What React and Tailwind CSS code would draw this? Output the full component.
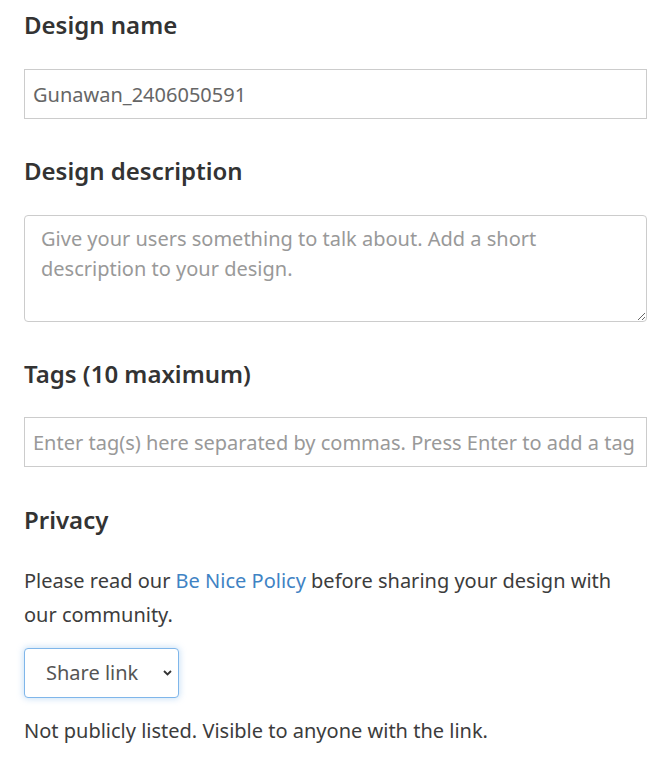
import React from "react";

const font = { fontFamily: "'Noto Sans', Roboto, sans-serif" };

function Heading({ children }) {
  return (
    <h2 className="text-[24px] leading-[30px] font-semibold text-[#333333]">
      {children}
    </h2>
  );
}

export default function App() {
  return (
    <div className="bg-white w-[669px] h-[757px] overflow-hidden" style={font}>
      <div className="pl-[24px] pr-[22px] pt-[10px] flex flex-col">
        <Heading>Design name</Heading>
        <input
          className="mt-[29px] h-[50px] w-full border border-[#cccccc] px-[8px] text-[20px] text-[#666666] outline-none"
          defaultValue="Gunawan_2406050591"
        />

        <div className="mt-[37px]">
          <Heading>Design description</Heading>
        </div>
        <textarea
          className="mt-[29px] h-[107px] w-full border border-[#cccccc] rounded-[4px] px-[16px] py-[8px] text-[20px] leading-[30px] text-[#666666] placeholder:text-[#999999] outline-none"
          placeholder="Give your users something to talk about. Add a short description to your design."
        />

        <div className="mt-[37px]">
          <Heading>Tags (10 maximum)</Heading>
        </div>
        <input
          className="mt-[28px] h-[50px] w-full border border-[#cccccc] px-[8px] text-[20px] text-[#666666] placeholder:text-[#999999] outline-none"
          placeholder="Enter tag(s) here separated by commas. Press Enter to add a tag"
        />

        <div className="mt-[38px]">
          <Heading>Privacy</Heading>
        </div>
        <p className="mt-[29px] text-[20px] leading-[34px] text-[#3c3c3c]">
          Please read our <a className="text-[#3f83c4]" href="#">Be Nice Policy</a> before sharing your design with our community.
        </p>

        <div className="mt-[16px] relative w-[155px] h-[50px]">
          <select
            className="appearance-none w-full h-full border border-[#7fb6ea] rounded-[4px] pl-[21px] pr-[30px] text-[20px] text-[#555555] bg-white shadow-[0_0_6px_1px_rgba(128,182,234,0.4)] outline-none"
            defaultValue="share"
          >
            <option value="share">Share link</option>
          </select>
          <svg
            className="absolute right-[6px] top-[20px] pointer-events-none"
            width="11"
            height="10"
            viewBox="0 0 11 10"
          >
            <path d="M2 3 L5.5 6.5 L9 3" fill="none" stroke="#333" strokeWidth="1.8" />
          </svg>
        </div>

        <p className="mt-[16px] text-[20px] leading-[34px] text-[#3c3c3c]">
          Not publicly listed. Visible to anyone with the link.
        </p>
      </div>
    </div>
  );
}
